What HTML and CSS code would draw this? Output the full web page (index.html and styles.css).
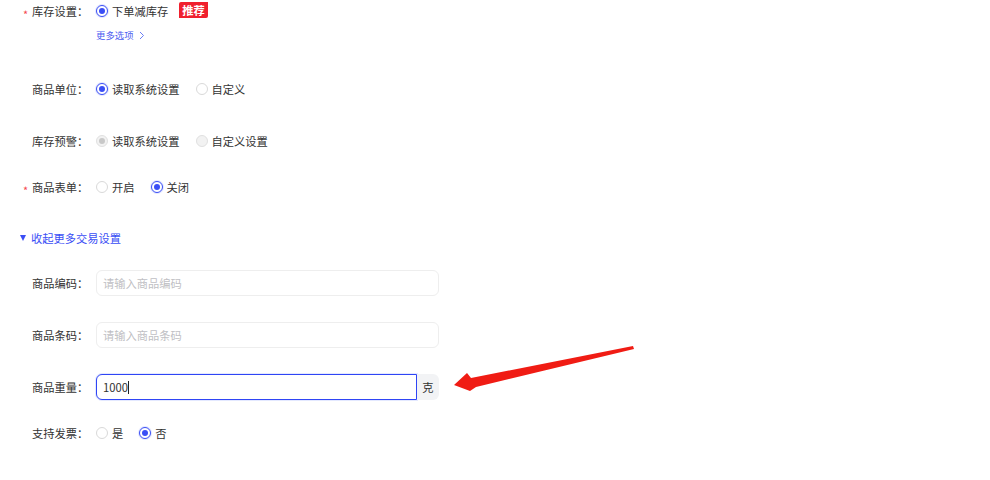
FILE: index.html
```html
<!DOCTYPE html>
<html lang="zh">
<head>
<meta charset="utf-8">
<link rel="stylesheet" href="styles.css">
</head>
<body>
<div class="form">
  <div class="row r1">
    <div class="label"><span class="req">*</span>库存设置：</div>
    <div class="ctrl">
      <label class="radio"><span class="dot on"></span>下单减库存</label>
      <span class="tag">推荐</span>
    </div>
  </div>
  <div class="more"><a>更多选项</a><svg class="chev" width="6" height="9" viewBox="0 0 6 9"><path d="M1 1l3.5 3.5L1 8" fill="none" stroke="#6b7ef5" stroke-width="1"/></svg></div>

  <div class="row r2">
    <div class="label">商品单位：</div>
    <div class="ctrl">
      <label class="radio"><span class="dot on"></span>读取系统设置</label>
      <label class="radio"><span class="dot"></span>自定义</label>
    </div>
  </div>

  <div class="row r3">
    <div class="label">库存预警：</div>
    <div class="ctrl">
      <label class="radio"><span class="dot dis on"></span>读取系统设置</label>
      <label class="radio"><span class="dot dis"></span>自定义设置</label>
    </div>
  </div>

  <div class="row r4">
    <div class="label"><span class="req">*</span>商品表单：</div>
    <div class="ctrl">
      <label class="radio"><span class="dot"></span>开启</label>
      <label class="radio"><span class="dot on"></span>关闭</label>
    </div>
  </div>

  <div class="toggle"><span class="tri"></span>收起更多交易设置</div>

  <div class="row in r6">
    <div class="label">商品编码：</div>
    <div class="ctrl"><div class="input"><span class="ph">请输入商品编码</span></div></div>
  </div>

  <div class="row in r7">
    <div class="label">商品条码：</div>
    <div class="ctrl"><div class="input"><span class="ph">请输入商品条码</span></div></div>
  </div>

  <div class="row in r8">
    <div class="label">商品重量：</div>
    <div class="ctrl">
      <div class="group">
        <div class="input focus"><span class="val">1000</span><span class="caret"></span></div>
        <div class="suffix">克</div>
      </div>
    </div>
  </div>

  <div class="row r9">
    <div class="label">支持发票：</div>
    <div class="ctrl">
      <label class="radio"><span class="dot"></span>是</label>
      <label class="radio"><span class="dot on"></span>否</label>
    </div>
  </div>
</div>

<svg class="arrow" width="990" height="480" viewBox="0 0 990 480">
  <polygon points="454,385 467,373 471,378 633,346 634,349 476,387 470,391" fill="#f01c14"/>
</svg>
</body>
</html>
```

FILE: styles.css
```css
html, body {
  margin: 0;
  padding: 0;
  background: #fff;
}
body {
  font-family: "Noto Sans CJK SC", "Noto Sans", sans-serif;
  font-size: 11.25px;
  color: #333;
  width: 990px;
  height: 480px;
  position: relative;
  overflow: hidden;
}
.form {
  display: flex;
  flex-direction: column;
}
.row {
  display: flex;
  align-items: center;
  height: 22px;
}
.row.in { height: 26px; }
.label {
  position: relative;
  box-sizing: border-box;
  width: 96px;
  padding-left: 32px;
  white-space: nowrap;
  color: #333;
  line-height: 16px;
}
.req {
  position: absolute;
  left: 23px;
  top: 3px;
  color: #f5474f;
  font-size: 11px;
}
.ctrl {
  display: flex;
  align-items: center;
}
.radio {
  display: flex;
  align-items: center;
  margin-right: 16px;
  color: #333;
  line-height: 16px;
}
.dot {
  box-sizing: border-box;
  width: 12px;
  height: 12px;
  border-radius: 50%;
  border: 1px solid #d9d9d9;
  background: #fff;
  margin-right: 4px;
  position: relative;
}
.dot.on {
  border-color: #3a4ef5;
  box-shadow: 0 0 0 1px #e3e7ff;
}
.dot.on::after {
  content: "";
  position: absolute;
  left: 2px;
  top: 2px;
  width: 6px;
  height: 6px;
  border-radius: 50%;
  background: #3a4ef5;
}
.dot.dis {
  border-color: #e0e0e0;
  background: #f2f2f2;
  box-shadow: none;
}
.dot.dis.on::after {
  background: #c8c8c8;
}
.tag {
  margin-left: -5px;
  margin-top: -3px;
  height: 16px;
  line-height: 16px;
  padding: 0 3px;
  background: #f0202e;
  color: #fff;
  font-weight: bold;
  border-radius: 2px 0 2px 0;
}
.more {
  margin-top: 5px;
  padding-left: 96px;
  height: 16px;
  display: flex;
  align-items: center;
  font-size: 9.4px;
  color: #4a5cf0;
}
.chev { margin-left: 5px; }
.r2 { margin-top: 35px; }
.r3 { margin-top: 30px; }
.r4 { margin-top: 24px; }
.toggle {
  margin-top: 32px;
  height: 16px;
  line-height: 16px;
  padding-left: 20px;
  display: flex;
  align-items: center;
  color: #3a4ef5;
}
.tri {
  width: 0;
  height: 0;
  border-left: 3.5px solid transparent;
  border-right: 3.5px solid transparent;
  border-top: 6px solid #3a4ef5;
  margin-right: 5px;
}
.r6 { margin-top: 24px; }
.r7 { margin-top: 26px; }
.r8 { margin-top: 26px; }
.r9 { margin-top: 22px; }
.input {
  box-sizing: border-box;
  width: 343px;
  height: 26px;
  border: 1px solid #eeeeee;
  border-radius: 6px;
  display: flex;
  align-items: center;
  padding-left: 6px;
  background: #fff;
}
.ph { color: #bfbfc4; }
.group {
  display: flex;
  align-items: stretch;
  height: 26px;
}
.input.focus {
  width: 321px;
  border: 1px solid #2f45f5;
  border-radius: 6px 0 0 6px;
  box-shadow: 0 0 0 1px #e4e9ff;
}
.val { color: #333; }
.caret {
  width: 1px;
  height: 13px;
  background: #222;
  margin-left: 0;
}
.suffix {
  width: 22px;
  background: #f2f3f5;
  border-radius: 0 6px 6px 0;
  display: flex;
  align-items: center;
  justify-content: center;
  color: #333;
}
.arrow {
  position: absolute;
  left: 0;
  top: 0;
  pointer-events: none;
}
```
